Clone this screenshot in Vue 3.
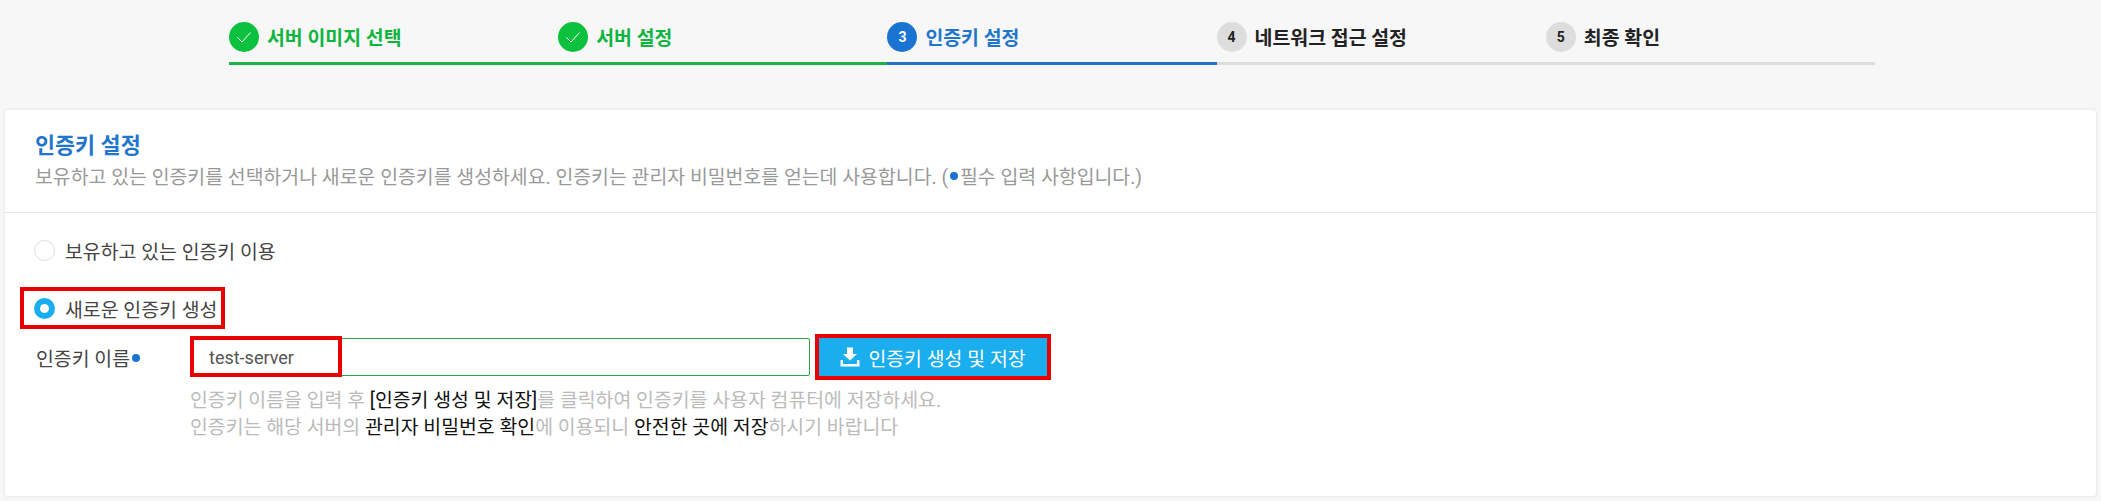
<script setup>
const steps = [
  { label: '서버 이미지 선택', state: 'done' },
  { label: '서버 설정', state: 'done' },
  { label: '인증키 설정', state: 'active', no: 3 },
  { label: '네트워크 접근 설정', state: 'todo', no: 4 },
  { label: '최종 확인', state: 'todo', no: 5 }
]
</script>

<template>
  <div class="page">
    <ul class="steps">
      <li v-for="step in steps" :key="step.label" class="step" :class="step.state">
        <span class="num">
          <svg v-if="step.state === 'done'" width="18" height="18" viewBox="0 0 18 18">
            <path d="M2.5 9.5 L7 14 L15.5 4.5" fill="none" stroke="#fff" stroke-width="1" />
          </svg>
          <template v-else>{{ step.no }}</template>
        </span>
        <span class="label">{{ step.label }}</span>
      </li>
    </ul>

    <div class="card">
      <div class="card-head">
        <h2>인증키 설정</h2>
        <p>보유하고 있는 인증키를 선택하거나 새로운 인증키를 생성하세요. 인증키는 관리자 비밀번호를 얻는데 사용합니다. (<i class="dot"></i>필수 입력 사항입니다.)</p>
      </div>
      <div class="card-body">
        <label class="radio-row">
          <span class="radio"></span>
          <span>보유하고 있는 인증키 이용</span>
        </label>
        <label class="radio-row marked">
          <span class="radio on"></span>
          <span>새로운 인증키 생성</span>
        </label>
        <div class="form-row">
          <div class="form-label">인증키 이름<i class="dot"></i></div>
          <div class="form-main">
            <div class="controls">
              <div class="input-wrap">
                <input class="key-input" type="text" value="test-server" />
                <span class="input-mark"></span>
              </div>
              <button class="save-btn" type="button">
                <svg width="20" height="20" viewBox="0 0 20 20">
                  <path d="M7 0.5 H13 V7 H17 L10 13.5 L3 7 H7 Z" fill="#fff" />
                  <path d="M0.5 13 H3 V17 H17 V13 H19.5 V19.5 H0.5 Z" fill="#fff" />
                </svg>
                인증키 생성 및 저장
              </button>
            </div>
            <p class="hint">인증키 이름을 입력 후 <b>[인증키 생성 및 저장]</b>를 클릭하여 인증키를 사용자 컴퓨터에 저장하세요.<br />인증키는 해당 서버의 <b>관리자 비밀번호 확인</b>에 이용되니 <b>안전한 곳에 저장</b>하시기 바랍니다</p>
          </div>
        </div>
      </div>
    </div>
  </div>
</template>

<style scoped>
.page {
  height: 501px;
  box-sizing: border-box;
  padding: 22px 4px 0;
  background: #f7f7f7;
  font-family: Roboto, "Noto Sans CJK KR", sans-serif;
  overflow: hidden;
}

.steps {
  display: flex;
  width: 1646px;
  margin: 0 0 0 225px;
  padding: 0;
  list-style: none;
}
.step {
  flex: 1;
  display: flex;
  align-items: center;
  gap: 8px;
  height: 30px;
  padding-bottom: 10px;
  border-bottom: 3px solid #ddd;
  font-size: 19.4px;
  font-weight: 700;
  color: #222;
}
.label {
  margin-top: -2px;
}
.num {
  width: 30px;
  height: 30px;
  border-radius: 50%;
  background: #ddd;
  display: flex;
  align-items: center;
  justify-content: center;
  font-size: 14px;
}
.step.done { color: #0fb53f; border-color: #1ab445; }
.step.done .num { background: #0cc13e; }
.step.active { color: #1f76cc; border-color: #2273c7; }
.step.active .num { background: #1a75d2; color: #fff; }

.card {
  margin-top: 44px;
  height: 388px;
  box-sizing: border-box;
  background: #fff;
  border: 1px solid #eee;
  border-radius: 4px;
  box-shadow: 0 0 3px rgba(0, 0, 0, 0.05);
}
.card-head {
  height: 103px;
  box-sizing: border-box;
  padding: 20px 30px 0;
  border-bottom: 1px solid #e8e8e8;
}
.card-head h2 {
  margin: 0;
  font-size: 21.8px;
  line-height: 32px;
  font-weight: 700;
  color: #1f76cc;
}
.card-head p {
  margin: 1px 0 0;
  font-size: 19.4px;
  line-height: 30px;
  color: #999;
}
.dot {
  display: inline-block;
  width: 8px;
  height: 8px;
  margin: 0 2px;
  border-radius: 50%;
  background: #1a75d2;
  vertical-align: 4px;
}

.card-body {
  padding: 16px 15px 0;
  display: flex;
  flex-direction: column;
  align-items: flex-start;
}
.radio-row {
  display: inline-flex;
  align-items: center;
  gap: 10px;
  height: 34px;
  padding: 0 4px 0 10px;
  border: 4px solid transparent;
  margin-bottom: 16px;
  font-size: 19.4px;
  color: #444;
}
.radio-row.marked {
  border-color: #e90000;
  margin-bottom: 9px;
}
.radio {
  width: 21px;
  height: 21px;
  box-sizing: border-box;
  border: 1px solid #ddd;
  border-radius: 50%;
  background: #fff;
}
.radio.on {
  border: 6px solid #1aaeee;
}

.form-row {
  display: flex;
  width: 100%;
}
.form-label {
  width: 170px;
  padding: 8px 0 0 16px;
  box-sizing: border-box;
  font-size: 19.4px;
  line-height: 28px;
  color: #444;
}
.form-main {
  flex: 1;
}
.controls {
  display: flex;
  align-items: center;
  gap: 9px;
}
.input-wrap {
  position: relative;
  width: 620px;
  height: 38px;
}
.key-input {
  width: 100%;
  height: 100%;
  box-sizing: border-box;
  padding: 0 18px;
  border: 1px solid #28a745;
  border-radius: 2px;
  outline: none;
  font-family: inherit;
  font-size: 18px;
  color: #555;
}
.input-mark {
  position: absolute;
  left: 0;
  top: -2px;
  width: 152px;
  height: 41px;
  box-sizing: border-box;
  border: 4px solid #e90000;
}
.save-btn {
  display: flex;
  align-items: center;
  justify-content: center;
  gap: 8px;
  width: 228px;
  height: 38px;
  border: 0;
  outline: 4px solid #e90000;
  background: #1aaeee;
  color: #fff;
  font-family: inherit;
  font-size: 19.4px;
  padding: 0;
}
.hint {
  margin: 11px 0 0;
  font-size: 19.4px;
  line-height: 27px;
  color: #bbb;
}
.hint b {
  font-weight: 400;
  color: #111;
}
</style>
